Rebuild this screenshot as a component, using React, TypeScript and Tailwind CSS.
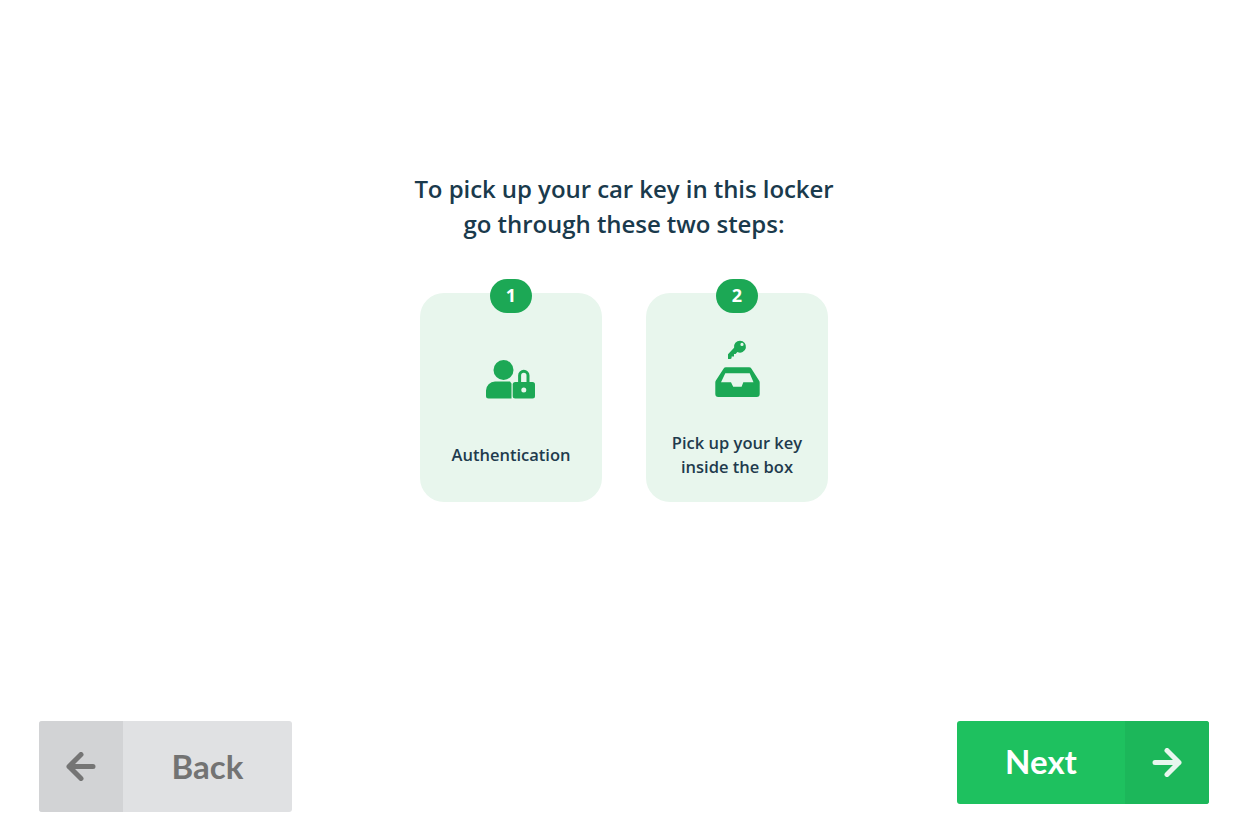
function UserLockIcon() {
  return (
    <svg width="50" height="39" viewBox="0 0 50 39" fill="#1ca855">
      <circle cx="17.5" cy="10" r="10" />
      <path d="M9 21.5H24L25.5 23.5V38.5H2.5a2.5 2.5 0 0 1-2.5-2.5V30.5a9 9 0 0 1 9-9z" />
      <rect x="26.7" y="22" width="22.3" height="16.5" rx="2.5" />
      <path d="M33.6 23V15.5a4.2 4.2 0 0 1 8.4 0V23" fill="none" stroke="#1ca855" strokeWidth="3" />
      <circle cx="37.8" cy="30" r="2.5" fill="#e8f6ed" />
    </svg>
  );
}

function KeyBoxIcon() {
  return (
    <svg width="45" height="58" viewBox="0 0 45 58" fill="#1ca855" className="mb-px">
      <path
        fillRule="evenodd"
        d="M25 .7a6 6 0 1 1-2.6 11.4L20.6 14H19V16.4H16.6V18.2L15.4 19H13V14.2L19.1 7.8A6 6 0 0 1 25 .7zM27 2.8a1.6 1.6 0 1 0 0 3.2a1.6 1.6 0 0 0 0-3.2z"
      />
      <path
        fillRule="evenodd"
        d="M11 27.3H34a3 3 0 0 1 2.5 1.4L44 40.5a3 3 0 0 1 .7 2V54a3 3 0 0 1-3 3H3.3a3 3 0 0 1-3-3V42.5a3 3 0 0 1 .6-2L8.5 28.7a3 3 0 0 1 2.5-1.4zM10.3 33.3H34.7L38.5 42.3H28.3L26.6 46.7H18.2L16 42.3H6z"
      />
    </svg>
  );
}

function StepCard({ step, children, label }: { step: number; children: React.ReactNode; label: React.ReactNode }) {
  return (
    <div className="relative flex h-[209px] w-[182px] flex-col items-center rounded-[24px] bg-[#e8f6ed]">
      <div className="absolute top-[-14px] left-[70px] flex h-[34px] w-[42px] items-center justify-center rounded-[17px] bg-[#1ca855] pb-[2px] text-[18px] font-bold text-white">
        {step}
      </div>
      <div className="flex h-[106px] w-full items-end justify-center">{children}</div>
      <div className="flex flex-1 items-center justify-center pt-[9px] text-center text-[16.5px] leading-[24px] font-semibold text-[#1f3b4d]">
        {label}
      </div>
    </div>
  );
}

export default function App() {
  return (
    <div className="flex h-[832px] w-full flex-col bg-white font-['Open_Sans',sans-serif]">
      <div className="flex flex-1 flex-col items-center pt-[171px]">
        <h1 className="text-center text-[24px] leading-[35px] font-semibold tracking-[-0.06px] text-[#1a3a4c]">
          To pick up your car key in this locker
          <br />
          go through these two steps:
        </h1>
        <div className="mt-[52px] flex gap-[44px]">
          <StepCard step={1} label="Authentication">
            <UserLockIcon />
          </StepCard>
          <StepCard step={2} label={<>Pick up your key<br />inside the box</>}>
            <KeyBoxIcon />
          </StepCard>
        </div>
      </div>

      <div className="flex h-[111px] items-start justify-between px-[39px] font-['Lato',sans-serif] text-[33px] font-bold">
        <button className="flex h-[91px] w-[253px] overflow-hidden rounded-[3px] bg-[#e0e1e3] text-[#737373]">
          <span className="flex h-full w-[84px] items-center justify-center bg-[#d2d3d5]">
            <svg width="30" height="29" viewBox="0 0 30 29" fill="none" stroke="#757575" strokeWidth="5" strokeLinecap="round" strokeLinejoin="round">
              <path d="M27 14.5H3M15 2.5L3 14.5L15 26.5" />
            </svg>
          </span>
          <span className="flex flex-1 items-center justify-center">Back</span>
        </button>
        <button className="flex h-[83px] w-[252px] overflow-hidden rounded-[3px] bg-[#1ec15f] text-white">
          <span className="flex flex-1 items-center justify-center pb-[2px]">Next</span>
          <span className="flex h-full w-[84px] items-center justify-center bg-[#1cb75a]">
            <svg width="30" height="29" viewBox="0 0 30 29" fill="none" stroke="#e8f6ee" strokeWidth="5" strokeLinecap="round" strokeLinejoin="round">
              <path d="M3 14.5H27M15 2.5L27 14.5L15 26.5" />
            </svg>
          </span>
        </button>
      </div>
    </div>
  );
}
